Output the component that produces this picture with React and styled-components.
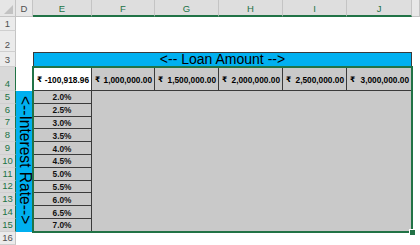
import React from 'react';
import styled, { createGlobalStyle } from 'styled-components';

const Global = createGlobalStyle`
  html, body { margin: 0; padding: 0; background: #fff; overflow: hidden; }
  body { font-family: "Liberation Sans", "DejaVu Sans", Arial, sans-serif; }
`;

const GREEN = '#217346';
const DARK = '#3a3a3a';
const FILL = '#c9c9c9';
const BLUE = '#00b0f0';

const Sheet = styled.div`
  display: grid;
  grid-template-columns: 16px 17px 59px 63px 64px 64px 64px 65px 1fr;
  grid-template-rows: 17px 14px 21px 15px 24px repeat(11, 12.8px) 1fr;
  width: 420px;
  height: 245px;
  background: #fff;
  font-family: "Liberation Sans", "DejaVu Sans", Arial, sans-serif;
`;

const Corner = styled.div`
  grid-column: 1;
  grid-row: 1;
  background: #e6e6e6;
  border-right: 1px solid #c4c4c4;
  border-bottom: 1px solid #c4c4c4;
  box-sizing: border-box;
  position: relative;
  &::after {
    content: '';
    position: absolute;
    right: 2px;
    bottom: 2px;
    width: 0;
    height: 0;
    border-left: 9px solid transparent;
    border-bottom: 9px solid #c2c2c2;
  }
`;

const ColHeader = styled.div`
  grid-row: 1;
  grid-column: ${p => p.$col};
  box-sizing: border-box;
  background: ${p => (p.$sel ? '#dedede' : '#e8e8e8')};
  border-right: 1px solid #c4c4c4;
  border-bottom: ${p => (p.$sel ? `2px solid ${GREEN}` : '1px solid #c4c4c4')};
  color: ${p => (p.$sel ? GREEN : '#505050')};
  font-size: 9.5px;
  display: flex;
  align-items: center;
  justify-content: center;
  padding-top: 1px;
`;

const RowHeader = styled.div`
  grid-column: 1;
  grid-row: ${p => p.$row};
  box-sizing: border-box;
  background: ${p => (p.$sel ? '#d9d9d9' : '#ebebeb')};
  border-bottom: 1px solid #cfcfcf;
  border-right: ${p => (p.$sel ? `1px solid ${GREEN}` : '1px solid #c4c4c4')};
  color: ${p => (p.$sel ? GREEN : '#505050')};
  font-size: 9.5px;
  line-height: 11px;
  display: flex;
  align-items: flex-end;
  justify-content: center;
  padding-bottom: 1px;
`;

const LoanBand = styled.div`
  grid-column: 3 / 9;
  grid-row: 4;
  box-sizing: border-box;
  background: ${BLUE};
  border: 1px solid ${DARK};
  color: #000;
  font-size: 14px;
  display: flex;
  align-items: center;
  justify-content: center;
  padding-bottom: 1px;
`;

const RateBand = styled.div`
  grid-column: 2;
  grid-row: 6 / 17;
  box-sizing: border-box;
  background: ${BLUE};
  color: #000;
  font-size: 15.6px;
  writing-mode: vertical-rl;
  display: flex;
  align-items: center;
  justify-content: center;
  padding-bottom: 3px;
`;

const AmountCell = styled.div`
  grid-column: ${p => p.$col};
  grid-row: 5;
  box-sizing: border-box;
  background: ${p => (p.$white ? '#fff' : FILL)};
  border-right: 1px solid ${DARK};
  border-bottom: 1px solid ${DARK};
  border-left: ${p => (p.$first ? `1px solid ${DARK}` : 'none')};
  font-size: 8.3px;
  font-weight: bold;
  color: #000;
  display: flex;
  align-items: center;
  justify-content: space-between;
  padding: 2px 2px 0 3px;
  white-space: nowrap;
`;

const Rupee = styled.span`
  font-family: "DejaVu Sans", "Noto Sans", sans-serif;
  font-size: 7.5px;
`;

const RateCell = styled.div`
  grid-column: 3;
  grid-row: ${p => p.$row};
  box-sizing: border-box;
  background: ${FILL};
  border-right: 1px solid ${DARK};
  border-bottom: 1px solid ${DARK};
  font-size: 8.3px;
  font-weight: bold;
  color: #111;
  display: flex;
  align-items: center;
  justify-content: center;
  padding-top: 1px;
`;

const GrayArea = styled.div`
  grid-column: 4 / 9;
  grid-row: 6 / 17;
  background: ${FILL};
`;

const Selection = styled.div`
  grid-column: 3 / 9;
  grid-row: 5 / 17;
  position: relative;
  pointer-events: none;
  box-shadow: 0 0 0 1px ${GREEN}, inset 0 0 0 1px ${GREEN};
  z-index: 2;
`;

const FillHandle = styled.div`
  position: absolute;
  right: -4px;
  bottom: -4px;
  width: 5px;
  height: 5px;
  background: ${GREEN};
  border: 1px solid #fff;
`;

const cols = ['D', 'E', 'F', 'G', 'H', 'I', 'J', ''];
const amounts = [
  '-100,918.96',
  '1,000,000.00',
  '1,500,000.00',
  '2,000,000.00',
  '2,500,000.00',
  '3,000,000.00',
];
const rates = ['2.0%', '2.5%', '3.0%', '3.5%', '4.0%', '4.5%', '5.0%', '5.5%', '6.0%', '6.5%', '7.0%'];

export default function App() {
  return (
    <>
      <Global />
      <Sheet>
        <Corner />
        {cols.map((c, i) => (
          <ColHeader key={i} $col={i + 2} $sel={i >= 1 && i <= 6}>
            {c}
          </ColHeader>
        ))}
        {Array.from({ length: 16 }, (_, i) => (
          <RowHeader key={i} $row={i + 2} $sel={i + 1 >= 4 && i + 1 <= 15}>
            {i + 1}
          </RowHeader>
        ))}
        <LoanBand>{'<-- Loan Amount -->'}</LoanBand>
        {amounts.map((a, i) => (
          <AmountCell key={i} $col={i + 3} $white={i === 0} $first={i === 0}>
            <Rupee>₹</Rupee>
            <span>{a}</span>
          </AmountCell>
        ))}
        <RateBand>{'<--Interest Rate-->'}</RateBand>
        {rates.map((r, i) => (
          <RateCell key={i} $row={i + 6}>
            {r}
          </RateCell>
        ))}
        <GrayArea />
        <Selection>
          <FillHandle />
        </Selection>
      </Sheet>
    </>
  );
}
